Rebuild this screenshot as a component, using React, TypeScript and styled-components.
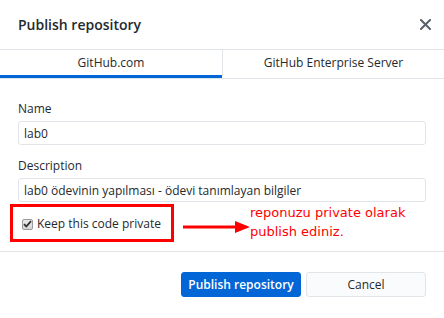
import React from 'react';
import styled, {createGlobalStyle} from 'styled-components';

const GlobalStyle = createGlobalStyle`
  html, body {
    margin: 0;
    padding: 0;
    background: #ffffff;
  }
  body {
    font-family: "Open Sans", "Noto Sans", sans-serif;
    color: #24292e;
  }
`;

const tabs = ['GitHub.com', 'GitHub Enterprise Server'];

export default function App() {
  return (
    <>
      <GlobalStyle />
      <Dialog>
        <Header>
          <Title>Publish repository</Title>
          <CloseButton aria-label="Close">
            <svg width="11" height="11" viewBox="0 0 11 11">
              <path d="M1 1L10 10M10 1L1 10" stroke="#586069" strokeWidth="2" strokeLinecap="square" />
            </svg>
          </CloseButton>
        </Header>
        <TabBar>
          {tabs.map((t, i) => (
            <Tab key={t} active={i === 0}>
              {t}
            </Tab>
          ))}
        </TabBar>
        <Form>
          <Field>
            <Label>Name</Label>
            <TextInput defaultValue="lab0" />
          </Field>
          <Field>
            <Label>Description</Label>
            <TextInput defaultValue="lab0 ödevinin yapılması - ödevi tanımlayan bilgiler" />
          </Field>
          <CheckRow>
            <CheckBox role="checkbox" aria-checked="true">
              <svg width="9" height="8" viewBox="0 0 9 8">
                <path d="M1 4.2L3.3 6.5L8 1.2" fill="none" stroke="#333333" strokeWidth="1.8" />
              </svg>
            </CheckBox>
            Keep this code private
          </CheckRow>
          <Annotation>
            <RedBox />
            <Arrow width="68" height="12" viewBox="0 0 68 12">
              <path d="M0 6H54" stroke="#ff0000" strokeWidth="3" />
              <path d="M52 0L67 6L52 12Z" fill="#ff0000" />
            </Arrow>
            <Note>
              reponuzu private olarak
              <br />
              publish ediniz.
            </Note>
          </Annotation>
        </Form>
        <Footer>
          <PrimaryButton>Publish repository</PrimaryButton>
          <SecondaryButton>Cancel</SecondaryButton>
        </Footer>
      </Dialog>
    </>
  );
}

const Dialog = styled.div`
  width: 444px;
  height: 318px;
  background: #ffffff;
  display: flex;
  flex-direction: column;
`;

const Header = styled.header`
  height: 49px;
  display: flex;
  align-items: center;
  justify-content: space-between;
  padding: 0 13px 0 18px;
`;

const Title = styled.h1`
  margin: 0;
  font-size: 14px;
  font-weight: 600;
  color: #24292e;
`;

const CloseButton = styled.button`
  border: none;
  background: none;
  padding: 0;
  width: 11px;
  height: 11px;
  display: flex;
  cursor: pointer;
`;

const TabBar = styled.nav`
  display: grid;
  grid-template-columns: 222px 1fr;
  border-top: 1px solid #e1e4e8;
  border-bottom: 1px solid #e1e4e8;
`;

const Tab = styled.div<{active?: boolean}>`
  height: 28px;
  display: flex;
  align-items: center;
  justify-content: center;
  font-size: 12px;
  color: #24292e;
  box-sizing: border-box;
  border-bottom: 3px solid ${(p) => (p.active ? '#0366d6' : 'transparent')};
  & + & {
    border-left: 1px solid #e1e4e8;
  }
`;

const Form = styled.section`
  position: relative;
  padding: 22px 18px 0;
  display: flex;
  flex-direction: column;
  gap: 13px;
  height: 173px;
  box-sizing: border-box;
  border-bottom: 1px solid #e1e4e8;
`;

const Field = styled.div`
  display: flex;
  flex-direction: column;
  gap: 4px;
`;

const Label = styled.label`
  font-size: 12px;
  line-height: 16px;
  color: #24292e;
`;

const TextInput = styled.input`
  height: 24px;
  box-sizing: border-box;
  border: 1px solid #e1e4e8;
  border-radius: 3px;
  padding: 0 5px;
  font-family: inherit;
  font-size: 12px;
  color: #24292e;
  outline: none;
`;

const CheckRow = styled.label`
  display: flex;
  align-items: center;
  gap: 4px;
  margin-top: 1px;
  padding-left: 4px;
  font-size: 12px;
  line-height: 16px;
  color: #24292e;
`;

const CheckBox = styled.span`
  width: 11px;
  height: 11px;
  box-sizing: border-box;
  border: 1px solid #9a9a9a;
  border-radius: 2px;
  background: linear-gradient(#e9e9e9, #d6d6d6);
  display: flex;
  align-items: center;
  justify-content: center;
`;

const Annotation = styled.div`
  position: absolute;
  left: 10px;
  top: 125px;
  display: flex;
  align-items: center;
`;

const RedBox = styled.div`
  width: 164px;
  height: 38px;
  box-sizing: border-box;
  border: 3px solid #ff0000;
`;

const Arrow = styled.svg`
  margin-left: 9px;
  margin-top: 8px;
  flex: none;
`;

const Note = styled.div`
  margin-left: -1px;
  margin-top: -2px;
  font-family: "DejaVu Sans", sans-serif;
  font-size: 13px;
  line-height: 19px;
  color: #ff0000;
  white-space: nowrap;
`;

const Footer = styled.footer`
  display: flex;
  justify-content: flex-end;
  gap: 5px;
  padding: 20px 18px 0;
`;

const ButtonBase = styled.button`
  width: 120px;
  height: 25px;
  box-sizing: border-box;
  border-radius: 3px;
  font-family: inherit;
  font-size: 12px;
  cursor: pointer;
`;

const PrimaryButton = styled(ButtonBase)`
  background: #0366d6;
  border: 1px solid #0366d6;
  color: #ffffff;
  font-weight: 600;
`;

const SecondaryButton = styled(ButtonBase)`
  background: #fafbfc;
  border: 1px solid #e1e4e8;
  color: #24292e;
`;
